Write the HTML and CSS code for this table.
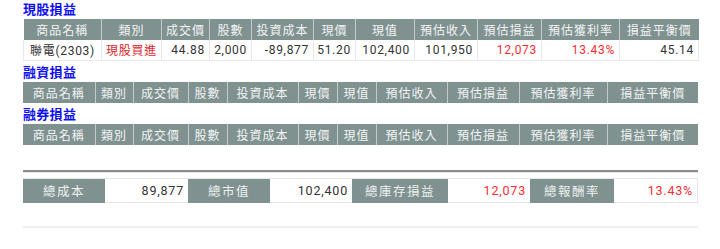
FILE: index.html
```html
<!DOCTYPE html>
<html lang="zh-Hant">
<head>
<meta charset="utf-8">
<title>損益</title>
<link rel="stylesheet" href="styles.css">
</head>
<body>
<div class="wrap">
  <div class="sec-title first">現股損益</div>
  <table class="grid t1">
    <colgroup>
      <col class="a1"><col class="a2"><col class="a3"><col class="a4"><col class="a5"><col class="a6"><col class="a7"><col class="a8"><col class="a9"><col class="a10"><col class="a11">
    </colgroup>
    <thead>
      <tr><th>商品名稱</th><th>類別</th><th>成交價</th><th>股數</th><th>投資成本</th><th>現價</th><th>現值</th><th>預估收入</th><th>預估損益</th><th>預估獲利率</th><th>損益平衡價</th></tr>
    </thead>
    <tbody>
      <tr><td class="c">聯電(2303)</td><td class="c red1">現股買進</td><td class="r">44.88</td><td class="r">2,000</td><td class="r">-89,877</td><td class="r">51.20</td><td class="r">102,400</td><td class="r">101,950</td><td class="r red">12,073</td><td class="r red">13.43%</td><td class="r">45.14</td></tr>
    </tbody>
  </table>

  <div class="sec-title">融資損益</div>
  <table class="grid t2">
    <colgroup>
      <col class="b1"><col class="b2"><col class="b3"><col class="b4"><col class="b5"><col class="b6"><col class="b7"><col class="b8"><col class="b9"><col class="b10"><col class="b11">
    </colgroup>
    <thead>
      <tr><th>商品名稱</th><th>類別</th><th>成交價</th><th>股數</th><th>投資成本</th><th>現價</th><th>現值</th><th>預估收入</th><th>預估損益</th><th>預估獲利率</th><th>損益平衡價</th></tr>
    </thead>
  </table>

  <div class="sec-title">融券損益</div>
  <table class="grid t2">
    <colgroup>
      <col class="b1"><col class="b2"><col class="b3"><col class="b4"><col class="b5"><col class="b6"><col class="b7"><col class="b8"><col class="b9"><col class="b10"><col class="b11">
    </colgroup>
    <thead>
      <tr><th>商品名稱</th><th>類別</th><th>成交價</th><th>股數</th><th>投資成本</th><th>現價</th><th>現值</th><th>預估收入</th><th>預估損益</th><th>預估獲利率</th><th>損益平衡價</th></tr>
    </thead>
  </table>

  <div class="sep"></div>

  <div class="summary">
    <div class="lbl">總成本</div><div class="val">89,877</div>
    <div class="lbl">總市值</div><div class="val">102,400</div>
    <div class="lbl">總庫存損益</div><div class="val red">12,073</div>
    <div class="lbl">總報酬率</div><div class="val red">13.43%</div>
  </div>

  <div class="bottom-line"></div>
</div>
</body>
</html>
```

FILE: styles.css
```css
html, body {
  margin: 0;
  padding: 0;
  background: #ffffff;
}

body {
  font-family: Roboto, "Noto Sans CJK TC", sans-serif;
  color: #333333;
}

.wrap {
  width: 675px;
  margin-left: 23px;
}

.sec-title {
  font-family: "Noto Sans CJK TC", sans-serif;
  font-size: 13px;
  font-weight: bold;
  color: #1010f0;
  line-height: 21px;
  height: 21px;
  letter-spacing: 0.3px;
}

.sec-title.first {
  height: 19px;
  line-height: 18px;
}

.grid {
  width: 675px;
  border-collapse: collapse;
  table-layout: fixed;
  font-size: 12px;
}

.grid th {
  background: #7f9290;
  color: #f2f4f4;
  font-family: "Noto Sans CJK TC", sans-serif;
  font-weight: normal;
  height: 21px;
  padding: 0;
  border: 1px solid #c3cbca;
  border-top: none;
  border-bottom: none;
  letter-spacing: 1px;
  text-align: center;
  white-space: nowrap;
  overflow: hidden;
  box-sizing: border-box;
}

.grid th:first-child { border-left: none; }
.grid th:last-child { border-right: none; }

.grid td {
  height: 20px;
  padding: 0 4px 0 2px;
  border: 1px solid #e8e8e8;
  border-top: none;
  letter-spacing: 0.7px;
  white-space: nowrap;
  box-sizing: border-box;
}

.grid td.c { text-align: center; padding: 0; }
.grid td.r { text-align: right; }
.red1 { color: #e2232a; font-family: "Noto Sans CJK TC", sans-serif; }
.red { color: #ff2a2f; }

.a1 { width: 78px; } .a2 { width: 60px; } .a3 { width: 48px; } .a4 { width: 42px; }
.a5 { width: 62px; } .a6 { width: 42px; } .a7 { width: 59px; } .a8 { width: 63px; }
.a9 { width: 64px; } .a10 { width: 78px; } .a11 { width: 79px; }

.b1 { width: 72px; } .b2 { width: 38px; } .b3 { width: 55px; } .b4 { width: 39px; }
.b5 { width: 71px; } .b6 { width: 39px; } .b7 { width: 39px; } .b8 { width: 71px; }
.b9 { width: 72px; } .b10 { width: 88px; } .b11 { width: 91px; }

.sep {
  margin-top: 25px;
  height: 2px;
  background: #8c8c8c;
  border-bottom: 1px solid #e6e6e6;
}

.summary {
  margin-top: 5px;
  display: grid;
  grid-template-columns: 82px 83px 82px 82px 96px 82px 84px 1fr;
  height: 25px;
  border: 1px solid #e6e6e6;
  border-left: none;
  box-sizing: border-box;
  font-size: 12.5px;
}

.summary .lbl {
  background: #7f9290;
  color: #eef1f0;
  font-family: "Noto Sans CJK TC", sans-serif;
  text-align: center;
  line-height: 24px;
  letter-spacing: 1.5px;
}

.summary .val {
  text-align: right;
  line-height: 24px;
  padding-right: 4px;
  letter-spacing: 0.8px;
}

.summary .val.red { color: #ff2a2f; }

.bottom-line {
  margin-top: 23px;
  height: 2px;
  background: #f0f0f0;
}
```
